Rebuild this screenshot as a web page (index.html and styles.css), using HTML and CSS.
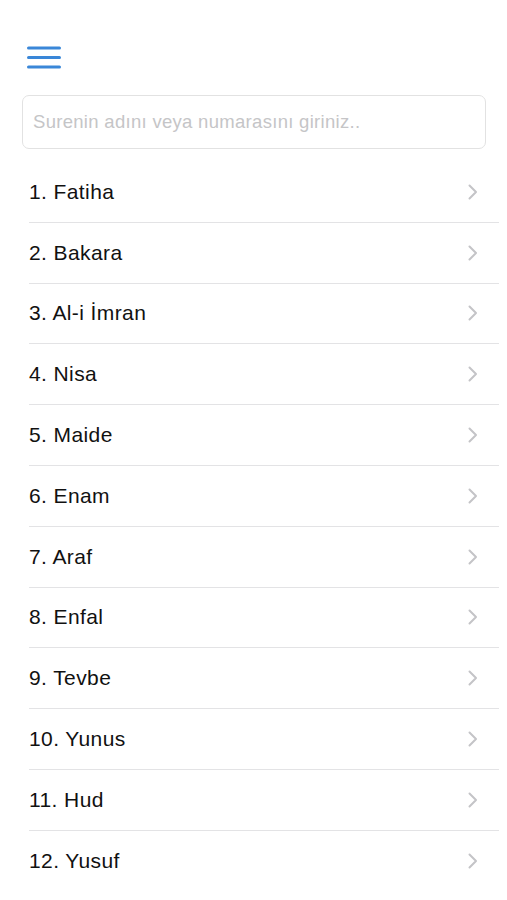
FILE: index.html
```html
<!DOCTYPE html>
<html lang="tr">
<head>
    <meta charset="UTF-8">
    <meta name="viewport" content="width=device-width, initial-scale=1.0">
    <title>Sureler</title>
    <link rel="stylesheet" href="styles.css">
</head>
<body>
    <div class="top-bar">
        <button class="menu-button" aria-label="Menü">
            <svg width="34" height="24" viewBox="0 0 34 24">
                <line x1="1.5" y1="2" x2="32.5" y2="2" />
                <line x1="1.5" y1="11.5" x2="32.5" y2="11.5" />
                <line x1="1.5" y1="21" x2="32.5" y2="21" />
            </svg>
        </button>
    </div>
    <div class="search">
        <input type="text" placeholder="Surenin adını veya numarasını giriniz..">
    </div>
    <ul class="sure-list">
        <li><span>1. Fatiha</span><svg class="chevron" viewBox="0 0 10 16"><path d="M1.5 1.5 L8 8 L1.5 14.5" /></svg></li>
        <li><span>2. Bakara</span><svg class="chevron" viewBox="0 0 10 16"><path d="M1.5 1.5 L8 8 L1.5 14.5" /></svg></li>
        <li><span>3. Al-i İmran</span><svg class="chevron" viewBox="0 0 10 16"><path d="M1.5 1.5 L8 8 L1.5 14.5" /></svg></li>
        <li><span>4. Nisa</span><svg class="chevron" viewBox="0 0 10 16"><path d="M1.5 1.5 L8 8 L1.5 14.5" /></svg></li>
        <li><span>5. Maide</span><svg class="chevron" viewBox="0 0 10 16"><path d="M1.5 1.5 L8 8 L1.5 14.5" /></svg></li>
        <li><span>6. Enam</span><svg class="chevron" viewBox="0 0 10 16"><path d="M1.5 1.5 L8 8 L1.5 14.5" /></svg></li>
        <li><span>7. Araf</span><svg class="chevron" viewBox="0 0 10 16"><path d="M1.5 1.5 L8 8 L1.5 14.5" /></svg></li>
        <li><span>8. Enfal</span><svg class="chevron" viewBox="0 0 10 16"><path d="M1.5 1.5 L8 8 L1.5 14.5" /></svg></li>
        <li><span>9. Tevbe</span><svg class="chevron" viewBox="0 0 10 16"><path d="M1.5 1.5 L8 8 L1.5 14.5" /></svg></li>
        <li><span>10. Yunus</span><svg class="chevron" viewBox="0 0 10 16"><path d="M1.5 1.5 L8 8 L1.5 14.5" /></svg></li>
        <li><span>11. Hud</span><svg class="chevron" viewBox="0 0 10 16"><path d="M1.5 1.5 L8 8 L1.5 14.5" /></svg></li>
        <li><span>12. Yusuf</span><svg class="chevron" viewBox="0 0 10 16"><path d="M1.5 1.5 L8 8 L1.5 14.5" /></svg></li>
    </ul>
</body>
</html>
```

FILE: styles.css
```css
body {
    margin: 0;
    background-color: #fff;
    font-family: "Liberation Sans", Arial, sans-serif;
    color: #111;
    overflow: hidden;
}
.top-bar {
    height: 95px;
    padding-left: 27px;
    padding-top: 46px;
    box-sizing: border-box;
}
.menu-button {
    display: block;
    padding: 0;
    background: none;
    border: none;
    cursor: pointer;
}
.menu-button line {
    stroke: #3a87d8;
    stroke-width: 3;
    stroke-linecap: round;
}
.search {
    margin: 0 21px 0 22px;
}
.search input {
    display: block;
    width: 100%;
    height: 54px;
    box-sizing: border-box;
    padding: 0 10px;
    border: 1px solid #e2e2e2;
    border-radius: 7px;
    font-family: inherit;
    font-size: 18.5px;
    letter-spacing: 0.3px;
    color: #111;
    outline: none;
}
.search input::placeholder {
    color: #c5c5c7;
}
.sure-list {
    list-style: none;
    margin: 13px 8px 0 29px;
    padding: 0;
}
.sure-list li {
    display: flex;
    justify-content: space-between;
    align-items: center;
    height: 60.8px;
    box-sizing: border-box;
    padding-right: 21px;
    border-bottom: 1px solid #e3e3e5;
    font-size: 21px;
    letter-spacing: 0.4px;
}
.sure-list li:last-child {
    border-bottom: none;
}
.chevron {
    width: 10px;
    height: 16px;
    fill: none;
    stroke: #c4c4c7;
    stroke-width: 2;
    stroke-linecap: round;
    stroke-linejoin: round;
}
```
